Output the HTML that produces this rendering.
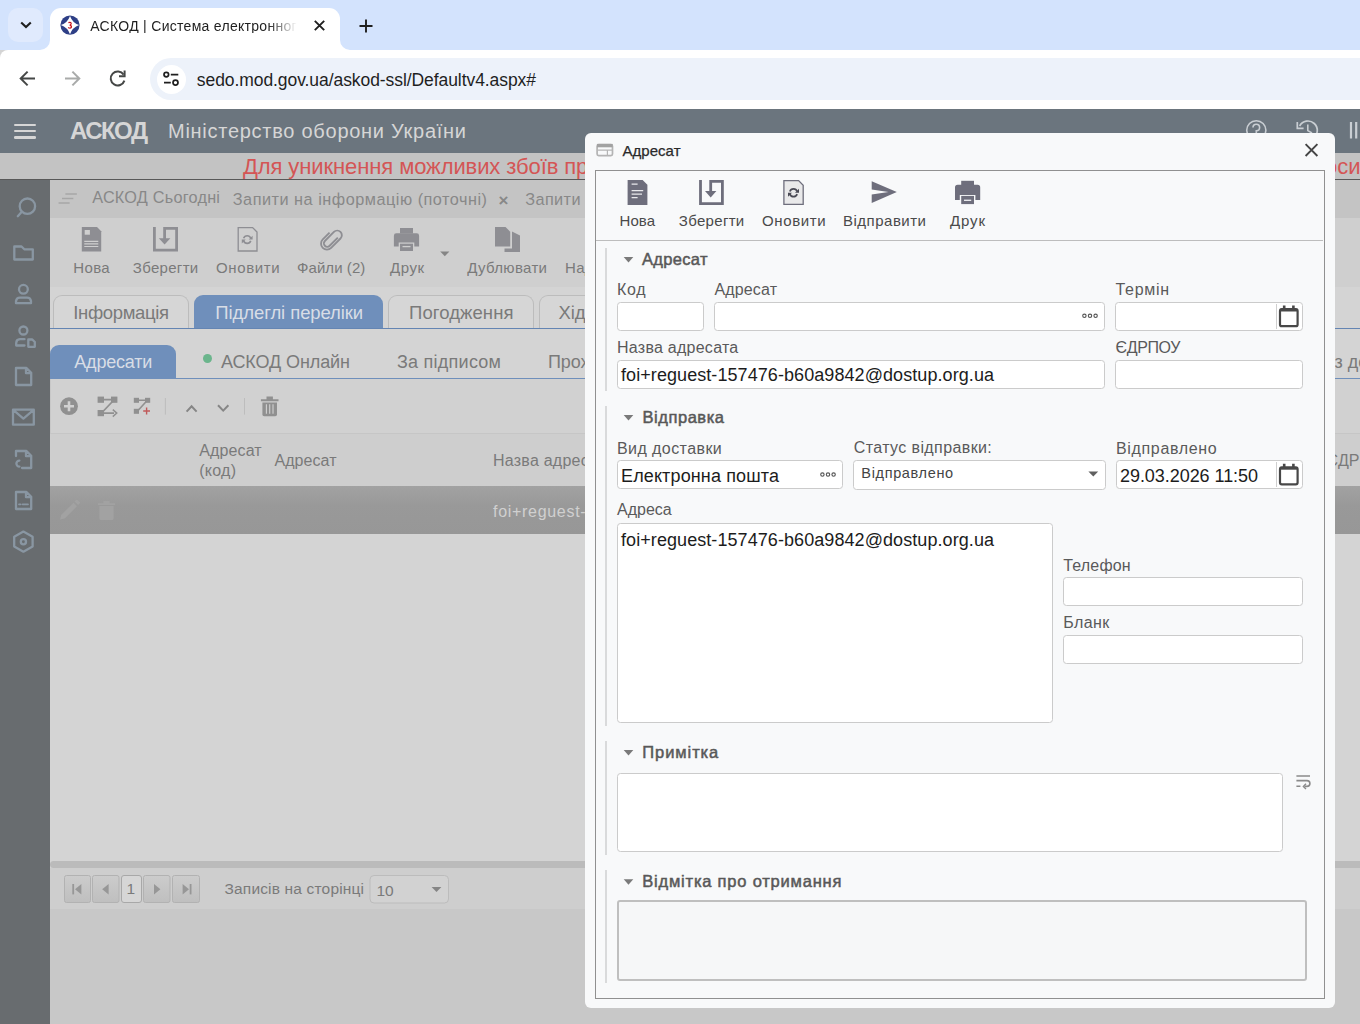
<!DOCTYPE html>
<html lang="uk">
<head>
<meta charset="utf-8">
<title>АСКОД | Система електронного документообігу</title>
<style>
html,body{margin:0;padding:0;}
body{width:1360px;height:1024px;position:relative;overflow:hidden;background:#d4d4d4;font-family:"Liberation Sans",sans-serif;}
.b{position:absolute;box-sizing:border-box;}
.t{position:absolute;white-space:pre;line-height:1;display:block;}
svg{position:absolute;overflow:visible;}
.inp{position:absolute;box-sizing:border-box;background:#fff;border:1px solid #cbcbcb;border-radius:3.5px;}
.vl{position:absolute;width:2px;background:#d9dadb;left:605px;}
</style>
</head>
<body>
<!-- ======= browser chrome ======= -->
<div class="b" id="tabstrip" style="left:0;top:0;width:1360px;height:50px;background:#d3e3fd;"></div>
<div class="b" style="left:8px;top:8px;width:35px;height:34px;border-radius:10px;background:#e0eafd;"></div>
<svg style="left:18px;top:20px" width="16" height="10" viewBox="0 0 16 10"><path d="M3.2 2.4 L8 7 L12.8 2.4" fill="none" stroke="#1f1f1f" stroke-width="2.1"/></svg>
<div class="b" style="left:50px;top:8px;width:290px;height:42px;border-radius:11px 11px 0 0;background:#fff;"></div>
<svg style="left:40px;top:40px" width="10" height="10"><path d="M10 0 V10 H0 A10 10 0 0 0 10 0Z" fill="#fff"/></svg>
<svg style="left:340px;top:40px" width="10" height="10"><path d="M0 0 V10 H10 A10 10 0 0 1 0 0Z" fill="#fff"/></svg>
<svg style="left:59px;top:14px" width="22" height="22" viewBox="59 14 22 22"><circle cx="70" cy="25.1" r="9.6" fill="#2e3f86"/><path d="M70 15.9 Q72.4 22.7 79.2 25.1 Q72.4 27.5 70 34.3 Q67.6 27.5 60.8 25.1 Q67.6 22.7 70 15.9 Z" fill="#fff"/><path d="M68.4 22.7 Q71.4 21.7 71.1 23.9 Q70.7 25.2 69.7 25.2 Q71.9 25.7 71.3 27.4 Q70.4 28.8 68.1 27.5" fill="none" stroke="#c9151c" stroke-width="1.35"/></svg>
<svg style="left:313px;top:19px" width="13" height="13" viewBox="0 0 13 13"><path d="M1.8 1.8 L11.2 11.2 M11.2 1.8 L1.8 11.2" stroke="#1f1f1f" stroke-width="1.9" fill="none"/></svg>
<svg style="left:358px;top:18px" width="16" height="16" viewBox="0 0 16 16"><path d="M8 1.5 V14.5 M1.5 8 H14.5" stroke="#1f1f1f" stroke-width="1.9" fill="none"/></svg>
<div class="b" id="btoolbar" style="left:0;top:50px;width:1360px;height:59px;background:#fff;border-radius:8px 0 0 0;"></div>
<div class="b" style="left:150px;top:58px;width:1260px;height:42px;border-radius:21px;background:#edf2fa;"></div>
<div class="b" style="left:157px;top:65px;width:29px;height:29px;border-radius:15px;background:#fff;"></div>
<svg style="left:0px;top:58px" width="200" height="42" viewBox="0 58 200 42"><path d="M35 78.5 H21.5 M27.6 71.6 L20.7 78.5 L27.6 85.4" fill="none" stroke="#454746" stroke-width="2"/><path d="M65 78.5 H78.5 M72.4 71.6 L79.3 78.5 L72.4 85.4" fill="none" stroke="#a9abaa" stroke-width="2"/><path d="M123.6 74.6 A7 7 0 1 0 124.4 80.6" fill="none" stroke="#454746" stroke-width="2"/><path d="M124.6 70.6 V76.2 H119" fill="none" stroke="#454746" stroke-width="2"/><circle cx="166.3" cy="74.6" r="2.3" fill="none" stroke="#1f1f1f" stroke-width="1.7"/><path d="M170.8 74.6 H178.3 M164 82.6 H170.8" stroke="#1f1f1f" stroke-width="1.9"/><circle cx="175.5" cy="82.6" r="2.5" fill="none" stroke="#1f1f1f" stroke-width="1.7"/></svg>
<!-- ======= app ======= -->
<div class="b" id="apphead" style="left:0;top:109px;width:1360px;height:44px;background:#6b757e;"></div>
<div class="b" style="left:14px;top:123.5px;width:22px;height:2.6px;border-radius:1.3px;background:#d6d6d6;"></div>
<div class="b" style="left:14px;top:129.8px;width:22px;height:2.6px;border-radius:1.3px;background:#d6d6d6;"></div>
<div class="b" style="left:14px;top:136px;width:22px;height:2.6px;border-radius:1.3px;background:#d6d6d6;"></div>
<svg style="left:1240px;top:112px" width="120" height="40" viewBox="1240 112 120 40"><circle cx="1256.3" cy="130.3" r="9.6" fill="none" stroke="#c9ced3" stroke-width="1.6"/><path d="M1253 127.6 A3.3 3.3 0 1 1 1256.3 130.9 V133.2" fill="none" stroke="#c9ced3" stroke-width="1.6"/><circle cx="1256.3" cy="135.8" r="1" fill="#c9ced3"/><path d="M1299.6 126 A9.4 9.4 0 1 1 1299 133.5" fill="none" stroke="#c9ced3" stroke-width="1.7"/><path d="M1297.3 122 V128.3 H1303.6" fill="none" stroke="#c9ced3" stroke-width="1.7"/><path d="M1307.8 124.6 V130.6 L1312 133" fill="none" stroke="#c9ced3" stroke-width="1.6"/><path d="M1351 122 V138.5 M1356.2 122 V138.5" stroke="#c9ced3" stroke-width="2.2"/></svg>
<div class="b" id="banner" style="left:0;top:153px;width:1360px;height:26px;background:#c3c3c3;"></div>
<div class="b" style="left:0;top:179px;width:1360px;height:1px;background:#585858;"></div>
<div class="b" id="sidebar" style="left:0;top:180px;width:50px;height:844px;background:#686c6f;"></div>
<svg style="left:0px;top:190px" width="50" height="380" viewBox="0 190 50 380"><g fill="none" stroke="#8996a2" stroke-width="2.3" stroke-linejoin="round" stroke-linecap="round"><circle cx="27.4" cy="206.2" r="7.7"/><path d="M21.8 211.8 L17.8 216.2"/><path d="M14.3 246.5 H21.5 L24.3 249.3 H32.8 V259.5 H14.3 Z"/><circle cx="23.4" cy="289.3" r="4.4"/><path d="M16 303.2 V301 A4 4 0 0 1 20 297.7 H27 A4 4 0 0 1 31 301 V303.2 Z"/><circle cx="23.4" cy="330.5" r="4"/><path d="M16.2 345.5 V343 A4 4 0 0 1 20 339.2 H24.5 M16.2 345.5 H24.5"/><path d="M28.3 339.5 H32.3 L34.8 342 V346.8 H28.3 Z"/><path d="M16 368 H26.5 L31.2 372.7 V385 H16 Z M26 368.5 V373.2 H31"/><path d="M13 409.7 H33.8 V424.7 H13 Z M13.5 410.2 L23.4 418.6 L33.3 410.2"/><path d="M16 456 V451 H26.5 L31.2 455.7 V468 H22 M26 451.5 V456.2 H31"/><path d="M19.4 460.6 A3 3 0 1 0 19.4 466.6" /><path d="M16 492 H26.5 L31.2 496.7 V509 H16 Z M26 492.5 V497.2 H31"/><path d="M19 504.3 H20.5 M22.5 504.3 H28" stroke-width="1.8"/><path d="M23.4 531.6 L32.6 536.7 V546.6 L23.4 551.7 L14.2 546.6 V536.7 Z"/><circle cx="23.4" cy="541.7" r="2.6"/></g></svg>
<div class="b" id="tabbar" style="left:50px;top:180px;width:1310px;height:38px;background:#c4c4c4;"></div>
<div class="b" id="maintb" style="left:50px;top:218px;width:1310px;height:69px;background:#cfcfcf;"></div>
<svg style="left:55px;top:190px" width="545" height="72" viewBox="55 190 545 72"><path d="M65.4 194 H76.8 M62 198.5 H73.3 M58.6 203 H69.6" stroke="#a6a6a6" stroke-width="1.7"/><path d="M81.8 227 H97 L101.2 231.2 V251.6 H81.8 Z" fill="#8e8e93"/><rect x="84.7" y="230" width="5.2" height="4.7" fill="#cfcfcf"/><path d="M84.3 241.3 H98.3 M84.3 243.9 H98.3 M84.3 246.5 H98.3" stroke="#cfcfcf" stroke-width="1.2"/><path d="M154.4 227 V250.2 H176.6 V228.4 H164.6 V240" fill="none" stroke="#8e8e93" stroke-width="2.8"/><path d="M158.8 238.3 H170.4 L164.6 244.6 Z" fill="#8e8e93"/><path d="M238.2 227.6 H252.6 L257 232 V251 H238.2 Z" fill="none" stroke="#8e8e93" stroke-width="1.3"/><path d="M243.63 238.31 A3.8 3.8 0 0 1 250.77 238.31 M250.77 240.89 A3.8 3.8 0 0 1 243.63 240.89" fill="none" stroke="#8e8e93" stroke-width="1.6"/><path d="M252.6 235.7 V239.6 H248.7 Z M241.8 243.5 V239.6 H245.7 Z" fill="#8e8e93"/><g transform="translate(331.2 239.4) rotate(45) scale(0.8) translate(-331 -239.5)"><path d="M335.2 232 V246.5 A4.2 4.2 0 0 1 326.8 246.5 V230.5 A5.8 5.8 0 0 1 338.4 230.5 V247 A7.4 7.4 0 0 1 323.6 247 V235" fill="none" stroke="#8e8e93" stroke-width="2.3"/></g><path d="M400 228 H413 V233.5 H400 Z" fill="#8e8e93"/><path d="M396.3 233.3 H416.7 A2.4 2.4 0 0 1 419.1 235.7 V246.6 H414.3 V242.6 H398.7 V246.6 H393.9 V235.7 A2.4 2.4 0 0 1 396.3 233.3 Z" fill="#8e8e93"/><path d="M400 243.7 H413 V251 H400 Z" fill="#8e8e93"/><path d="M402.5 246.6 H410.5" stroke="#cfcfcf" stroke-width="1.3"/><path d="M440.2 251.6 H449.4 L444.8 256.2 Z" fill="#858585"/><path d="M495 227 H505.5 L510.2 231.7 V246.6 H495 Z" fill="#8e8e93"/><path d="M512 231.5 L520 235.5 V252 H504.5 V248.4 H512 Z" fill="#8e8e93"/></svg>
<!-- tabs -->
<div class="b" style="left:53px;top:295px;width:136px;height:34px;border:1px solid #bcbcbc;border-bottom:none;border-radius:9px 9px 0 0;background:#d6d6d6;"></div>
<div class="b" style="left:194px;top:295px;width:189px;height:34px;border-radius:9px 9px 0 0;background:#6f8fbb;"></div>
<div class="b" style="left:388px;top:295px;width:146px;height:34px;border:1px solid #bcbcbc;border-bottom:none;border-radius:9px 9px 0 0;background:#d6d6d6;"></div>
<div class="b" style="left:539px;top:295px;width:80px;height:34px;border:1px solid #bcbcbc;border-bottom:none;border-radius:9px 9px 0 0;background:#d6d6d6;"></div>
<div class="b" style="left:50px;top:328px;width:1310px;height:1px;background:#6485b3;"></div>
<!-- subtabs -->
<div class="b" style="left:50px;top:345px;width:126px;height:34px;border-radius:9px 9px 0 0;background:#6f8fbb;"></div>
<div class="b" style="left:50px;top:378px;width:1310px;height:1px;background:#6f8fbb;"></div>
<div class="b" style="left:203px;top:353.5px;width:9px;height:9px;border-radius:5px;background:#6bb58c;"></div>
<!-- grid -->
<div class="b" style="left:50px;top:379px;width:1310px;height:54px;background:#d1d1d1;border-left:1px solid #c8c8c8;"></div>
<div class="b" style="left:50px;top:433px;width:1310px;height:1px;background:#c6c6c6;"></div>
<div class="b" style="left:50px;top:434px;width:1310px;height:52px;background:#cecece;"></div>
<div class="b" style="left:50px;top:486px;width:1310px;height:48px;background:linear-gradient(#a2a2a2 0%,#999999 40%,#979797 100%);"></div>
<svg style="left:55px;top:392px" width="240" height="140" viewBox="55 392 240 140"><circle cx="69" cy="406.2" r="8.9" fill="#909090"/><path d="M69 401.2 V411.2 M64 406.2 H74" stroke="#d1d1d1" stroke-width="2.6"/><rect x="97.6" y="396.6" width="6.4" height="6.2" fill="#909090"/><rect x="111" y="396.6" width="6.4" height="6.2" fill="#909090"/><rect x="97.6" y="410" width="6.4" height="6.2" fill="#909090"/><path d="M103 399.7 H112 M112.5 401.5 L102.5 412 M103 413.1 H114" stroke="#909090" stroke-width="1.8" fill="none"/><path d="M112.8 409.6 L116.8 413.1 L112.8 416.6" stroke="#909090" stroke-width="1.4" fill="none"/><rect x="133.8" y="397.8" width="5.2" height="5" fill="#909090"/><rect x="145" y="397.8" width="5.2" height="5" fill="#909090"/><rect x="133.8" y="408.8" width="5.2" height="5" fill="#909090"/><path d="M138.5 400.3 H146 M146 401.8 L138.5 410" stroke="#909090" stroke-width="1.6" fill="none"/><path d="M146.6 407.6 V414.4 M143.2 411 H150" stroke="#c05a5a" stroke-width="1.4"/><path d="M165.4 398 V414.6" stroke="#bdbdbd" stroke-width="1"/><path d="M186.6 411.6 L191.6 406.2 L196.6 411.6" stroke="#868686" stroke-width="2" fill="none"/><path d="M218 405.2 L223.2 410.6 L228.4 405.2" stroke="#868686" stroke-width="2" fill="none"/><path d="M244.5 398 V414.6" stroke="#bdbdbd" stroke-width="1"/><path d="M260.9 399.2 H278.5 V401.2 H260.9 Z M266.5 396.6 H272.9 V399.4 H266.5 Z" fill="#909090"/><path d="M262.4 402.4 H277 V414.4 A1.8 1.8 0 0 1 275.2 416.2 H264.2 A1.8 1.8 0 0 1 262.4 414.4 Z" fill="#909090"/><path d="M266.4 404.2 V413.8 M269.7 404.2 V413.8 M273 404.2 V413.8" stroke="#d1d1d1" stroke-width="1.1"/><g fill="#a2a2a2"><path d="M60 519.6 L61.2 515 L73.5 502.7 L77 506.2 L64.7 518.5 Z M74.6 501.6 L76.2 500 A1 1 0 0 1 77.6 500 L79.7 502.1 A1 1 0 0 1 79.7 503.5 L78.1 505.1 Z"/><path d="M98 503.2 H115 V505 H98 Z M103.4 501 H109.6 V503.4 H103.4 Z M99.4 506 H113.6 V518.4 A1.6 1.6 0 0 1 112 520 H101 A1.6 1.6 0 0 1 99.4 518.4 Z"/></g></svg>
<div class="b" style="left:50px;top:861px;width:1310px;height:7px;background:#bbbbbb;border-radius:4px 0 0 4px;"></div>
<div class="b" style="left:50px;top:868px;width:1310px;height:41px;background:#cecece;"></div>
<div class="b" style="left:50px;top:909px;width:1310px;height:115px;background:#c8c8c8;"></div>
<svg style="left:60px;top:870px" width="400" height="40" viewBox="60 870 400 40"><defs><linearGradient id="pg" x1="0" y1="0" x2="0" y2="1"><stop offset="0" stop-color="#cccccc"/><stop offset="1" stop-color="#bfbfbf"/></linearGradient></defs><rect x="64.5" y="875.5" width="26" height="27" rx="2" fill="url(#pg)" stroke="#b2b2b2" stroke-width="1"/><rect x="92.5" y="875.5" width="26.5" height="27" rx="2" fill="url(#pg)" stroke="#b2b2b2" stroke-width="1"/><rect x="121.5" y="875.5" width="20" height="27" rx="2.5" fill="#d6d6d6" stroke="#a8a8a8"/><rect x="143.5" y="875.5" width="26.5" height="27" rx="2" fill="url(#pg)" stroke="#b2b2b2" stroke-width="1"/><rect x="172.5" y="875.5" width="27" height="27" rx="2" fill="url(#pg)" stroke="#b2b2b2" stroke-width="1"/><path d="M73.2 884 V894.4" stroke="#979797" stroke-width="1.8"/><path d="M81.4 884 V894.4 L75 889.2 Z" fill="#979797"/><path d="M108.6 884 V894.4 L102.2 889.2 Z" fill="#979797"/><path d="M154 884 V894.4 L160.4 889.2 Z" fill="#979797"/><path d="M182.6 884 V894.4 L189 889.2 Z" fill="#979797"/><path d="M190.6 884 V894.4" stroke="#979797" stroke-width="1.8"/><rect x="370" y="875.5" width="78.5" height="27.5" rx="4" fill="#d2d2d2" stroke="#bcbcbc"/><path d="M431.6 887 H441.4 L436.5 892 Z" fill="#858585"/></svg>
<span class="t" style="left:90.30px;top:19.01px;font-size:14px;color:#1f1f1f;letter-spacing:0.289px;-webkit-mask-image:linear-gradient(90deg,#000 86%,transparent 100%);mask-image:linear-gradient(90deg,#000 86%,transparent 100%);">АСКОД | Система електронног</span>
<span class="t" style="left:196.80px;top:72.00px;font-size:17.5px;color:#1f1f1f;letter-spacing:-0.072px;">sedo.mod.gov.ua/askod-ssl/Defaultv4.aspx#</span>
<span class="t" style="left:70.00px;top:119.01px;font-size:24px;color:#d6d6d6;letter-spacing:-1.543px;font-weight:700;">АСКОД</span>
<span class="t" style="left:168.00px;top:121.01px;font-size:20px;color:#d6d6d6;letter-spacing:0.729px;">Міністерство оборони України</span>
<span class="t" style="left:243.00px;top:156.00px;font-size:22px;color:#d45555;letter-spacing:-0.100px;">Для уникнення можливих збоїв при роботі в системі</span>
<span class="t" style="left:1324.90px;top:156.00px;font-size:22px;color:#d45555;">осил</span>
<span class="t" style="left:92.20px;top:189.01px;font-size:16.25px;color:#888888;letter-spacing:0.226px;">АСКОД Сьогодні</span>
<span class="t" style="left:232.80px;top:191.01px;font-size:16.25px;color:#888888;letter-spacing:0.509px;">Запити на інформацію (поточні)</span>
<span class="t" style="left:498.50px;top:192.00px;font-size:17px;color:#888888;letter-spacing:-0.938px;font-weight:700;">×</span>
<span class="t" style="left:525.30px;top:191.01px;font-size:16.25px;color:#888888;letter-spacing:0.390px;">Запити</span>
<span class="t" style="left:73.30px;top:260.01px;font-size:15px;color:#7a7a7a;letter-spacing:0.357px;">Нова</span>
<span class="t" style="left:132.80px;top:260.01px;font-size:15px;color:#7a7a7a;letter-spacing:0.309px;">Зберегти</span>
<span class="t" style="left:216.00px;top:260.01px;font-size:15px;color:#7a7a7a;letter-spacing:0.618px;">Оновити</span>
<span class="t" style="left:297.00px;top:260.01px;font-size:15px;color:#7a7a7a;letter-spacing:0.067px;">Файли (2)</span>
<span class="t" style="left:390.00px;top:260.01px;font-size:15px;color:#7a7a7a;letter-spacing:0.531px;">Друк</span>
<span class="t" style="left:467.20px;top:260.01px;font-size:15px;color:#7a7a7a;letter-spacing:0.332px;">Дублювати</span>
<span class="t" style="left:565.00px;top:260.01px;font-size:15px;color:#7a7a7a;letter-spacing:0.350px;">Надіслати</span>
<span class="t" style="left:73.30px;top:304.01px;font-size:18.5px;color:#7a7a7a;letter-spacing:-0.355px;">Інформація</span>
<span class="t" style="left:215.30px;top:304.01px;font-size:18.5px;color:#d8dde6;letter-spacing:-0.086px;">Підлеглі переліки</span>
<span class="t" style="left:409.00px;top:304.01px;font-size:18.5px;color:#7a7a7a;letter-spacing:0.085px;">Погодження</span>
<span class="t" style="left:558.40px;top:304.01px;font-size:18.5px;color:#7a7a7a;letter-spacing:-0.100px;">Хід</span>
<span class="t" style="left:74.30px;top:353.01px;font-size:18px;color:#d8dde6;letter-spacing:-0.208px;">Адресати</span>
<span class="t" style="left:220.90px;top:353.01px;font-size:18px;color:#7a7a7a;letter-spacing:-0.095px;">АСКОД Онлайн</span>
<span class="t" style="left:397.00px;top:353.01px;font-size:18px;color:#7a7a7a;letter-spacing:0.247px;">За підписом</span>
<span class="t" style="left:548.00px;top:353.01px;font-size:18px;color:#7a7a7a;letter-spacing:-0.100px;">Проходження</span>
<span class="t" style="left:199.30px;top:443.00px;font-size:16px;color:#7a7a7a;letter-spacing:0.119px;">Адресат</span>
<span class="t" style="left:199.30px;top:463.00px;font-size:16px;color:#7a7a7a;letter-spacing:0.245px;">(код)</span>
<span class="t" style="left:274.40px;top:453.00px;font-size:16px;color:#7a7a7a;letter-spacing:0.069px;">Адресат</span>
<span class="t" style="left:493.00px;top:453.00px;font-size:16px;color:#7a7a7a;letter-spacing:0.238px;">Назва адресата</span>
<span class="t" style="left:1326.50px;top:453.00px;font-size:16px;color:#7a7a7a;">ЄДРПОУ</span>
<span class="t" style="left:1334.60px;top:353.01px;font-size:18px;color:#7a7a7a;">з документами</span>
<span class="t" style="left:493.00px;top:504.00px;font-size:16px;color:#d0d0d0;letter-spacing:0.700px;">foi+reguest-157476-b60a9842@dostup.org.ua</span>
<span class="t" style="left:126.60px;top:881.00px;font-size:15.5px;color:#7a7a7a;">1</span>
<span class="t" style="left:224.50px;top:881.00px;font-size:15.5px;color:#7a7a7a;letter-spacing:0.167px;">Записів на сторінці</span>
<span class="t" style="left:376.60px;top:883.00px;font-size:15.5px;color:#7a7a7a;letter-spacing:-0.300px;">10</span>
<!-- ======= modal ======= -->
<div class="b" id="modal" style="left:585px;top:133px;width:750px;height:874.5px;background:#f8f9fa;border-radius:6px;"></div>
<div class="b" style="left:595px;top:170px;width:730px;height:829px;border:1px solid #909090;"></div>
<div class="b" style="left:596px;top:240px;width:727px;height:1px;background:#bdbdbd;"></div>
<svg style="left:590px;top:140px" width="745" height="70" viewBox="590 140 745 70"><rect x="597.1" y="144.6" width="15.4" height="11" rx="1.6" fill="none" stroke="#b4b4b4" stroke-width="1.7"/><path d="M597 145.6 H612.6" stroke="#a2a2a2" stroke-width="3.4"/><path d="M598 150.2 H612 M607.4 150.2 V155" stroke="#b5b5b5" stroke-width="1.2"/><path d="M1305.6 144.2 L1317.4 156 M1317.4 144.2 L1305.6 156" stroke="#454545" stroke-width="1.9"/><path d="M627.6 180 H642.6 L647.4 184.8 V205 H627.6 Z" fill="#6e6e7c"/><path d="M631.6 184.2 H637.6 M631.6 190.6 H643.2 M631.6 194.2 H642 M631.6 197.6 H637.6" stroke="#e9e9ec" stroke-width="1.3"/><path d="M700.5 180 V203.6 H722.4 V181.4 H710.7 V192.6" fill="none" stroke="#6e6e7c" stroke-width="2.8"/><path d="M705 191 H716.4 L710.7 197.4 Z" fill="#6e6e7c"/><path d="M783.9 180.6 H798.6 L803.2 185.2 V204.4 H783.9 Z" fill="#e9e9ea" stroke="#6e6e7c" stroke-width="1.3"/><path d="M789.84 191.47 A3.9 3.9 0 0 1 797.16 191.47 M797.16 194.13 A3.9 3.9 0 0 1 789.84 194.13" fill="none" stroke="#4a4a55" stroke-width="1.7"/><path d="M799 188.8 V192.8 H795 Z M788 196.8 V192.8 H792 Z" fill="#4a4a55"/><path d="M871.7 181.2 L896.8 192 L871.7 202.9 V194.6 L888.5 192 L871.7 189.4 Z" fill="#6e6e7c"/><path d="M961.2 180.8 H974 V186 H961.2 Z" fill="#6e6e7c"/><path d="M957.6 184.7 H977.6 A2.6 2.6 0 0 1 980.2 187.3 V199.9 H975.4 V194.9 H959.8 V199.9 H955 V187.3 A2.6 2.6 0 0 1 957.6 184.7 Z" fill="#6e6e7c"/><path d="M961.2 195.9 H974 V204.1 H961.2 Z" fill="#6e6e7c"/><path d="M964 200.3 H971.2" stroke="#e9e9ec" stroke-width="1.4"/></svg>
<div class="vl" style="top:248px;height:143px;"></div>
<div class="vl" style="top:406px;height:320px;"></div>
<div class="vl" style="top:741px;height:114px;"></div>
<div class="vl" style="top:870px;height:113px;"></div>
<!-- inputs -->
<div class="inp" style="left:617px;top:302px;width:87px;height:29px;"></div>
<div class="inp" style="left:714px;top:302px;width:391px;height:29px;"></div>
<div class="inp" style="left:1115px;top:302px;width:188px;height:29px;"></div>
<div class="inp" style="left:617px;top:359.5px;width:488px;height:29px;"></div>
<div class="inp" style="left:1115px;top:359.5px;width:188px;height:29px;"></div>
<div class="inp" style="left:617px;top:460px;width:226px;height:29px;"></div>
<div class="inp" style="left:853px;top:460px;width:253px;height:30px;"></div>
<div class="inp" style="left:1116px;top:460px;width:187px;height:29px;"></div>
<div class="inp" style="left:617px;top:523px;width:436px;height:200px;"></div>
<div class="inp" style="left:1063px;top:577px;width:240px;height:29px;"></div>
<div class="inp" style="left:1063px;top:635px;width:240px;height:29px;"></div>
<div class="inp" style="left:617px;top:773px;width:666px;height:79px;"></div>
<div class="inp" style="left:617px;top:900px;width:690px;height:81px;background:#f6f7f8;border:2px solid #bfbfbf;border-radius:3px;"></div>
<svg style="left:600px;top:250px" width="730" height="700" viewBox="600 250 730 700"><path d="M623.7 257 H633.3 L628.5 262.4 Z" fill="#7a7a7a"/><path d="M623.7 415 H633.3 L628.5 420.4 Z" fill="#7a7a7a"/><path d="M623.7 750 H633.3 L628.5 755.4 Z" fill="#7a7a7a"/><path d="M623.7 879.3 H633.3 L628.5 884.7 Z" fill="#7a7a7a"/><circle cx="1084.4" cy="315.8" r="1.7" fill="none" stroke="#555" stroke-width="1.1"/><circle cx="1090" cy="315.8" r="1.7" fill="none" stroke="#555" stroke-width="1.1"/><circle cx="1095.6" cy="315.8" r="1.7" fill="none" stroke="#555" stroke-width="1.1"/><circle cx="822.4" cy="474.6" r="1.7" fill="none" stroke="#555" stroke-width="1.1"/><circle cx="828" cy="474.6" r="1.7" fill="none" stroke="#555" stroke-width="1.1"/><circle cx="833.6" cy="474.6" r="1.7" fill="none" stroke="#555" stroke-width="1.1"/><path d="M1276.5 304 V329 M1276.5 462 V487" stroke="#cfcfcf" stroke-width="1"/><rect x="1280" y="309.2" width="17.6" height="17" rx="1.8" fill="#fff" stroke="#484848" stroke-width="2.2"/><path d="M1284.2 305.6 V310.1 M1293.4 305.6 V310.1" stroke="#484848" stroke-width="2.6"/><path d="M1280 310.2 H1297.6" stroke="#484848" stroke-width="2.6"/><rect x="1280" y="467.4" width="17.6" height="17" rx="1.8" fill="#fff" stroke="#484848" stroke-width="2.2"/><path d="M1284.2 463.8 V468.3 M1293.4 463.8 V468.3" stroke="#484848" stroke-width="2.6"/><path d="M1280 468.4 H1297.6" stroke="#484848" stroke-width="2.6"/><path d="M1088.4 471.4 H1098.2 L1093.3 476.4 Z" fill="#606060"/><path d="M1296.4 776 H1310 M1296.4 780.6 H1307 A2.9 2.9 0 0 1 1307 786.4 H1304.6 M1296.4 786.2 H1300.4" stroke="#8a8a8a" stroke-width="1.6" fill="none"/><path d="M1306 783.8 L1303.4 786.4 L1306 789" stroke="#8a8a8a" stroke-width="1.4" fill="none"/></svg>
<!-- ======= texts ======= -->
<span class="t" style="left:622.50px;top:143.01px;font-size:15px;color:#2a2a2a;letter-spacing:0.029px;-webkit-text-stroke:0.25px #2a2a2a;">Адресат</span>
<span class="t" style="left:619.50px;top:213.01px;font-size:15px;color:#4a4a4a;letter-spacing:0.057px;">Нова</span>
<span class="t" style="left:678.75px;top:213.01px;font-size:15px;color:#4a4a4a;letter-spacing:0.324px;">Зберегти</span>
<span class="t" style="left:762.00px;top:213.01px;font-size:15px;color:#4a4a4a;letter-spacing:0.643px;">Оновити</span>
<span class="t" style="left:843.00px;top:213.01px;font-size:15px;color:#4a4a4a;letter-spacing:0.500px;">Відправити</span>
<span class="t" style="left:950.00px;top:213.01px;font-size:15px;color:#4a4a4a;letter-spacing:0.865px;">Друк</span>
<span class="t" style="left:642.00px;top:251.02px;font-size:16.5px;color:#585858;letter-spacing:0.315px;-webkit-text-stroke:0.5px #585858;">Адресат</span>
<span class="t" style="left:642.50px;top:409.02px;font-size:16.5px;color:#585858;letter-spacing:0.547px;-webkit-text-stroke:0.5px #585858;">Відправка</span>
<span class="t" style="left:642.30px;top:744.02px;font-size:16.5px;color:#585858;letter-spacing:0.917px;-webkit-text-stroke:0.5px #585858;">Примітка</span>
<span class="t" style="left:642.30px;top:873.02px;font-size:16.5px;color:#585858;letter-spacing:0.789px;-webkit-text-stroke:0.5px #585858;">Відмітка про отримання</span>
<span class="t" style="left:617.00px;top:282.00px;font-size:16px;color:#5a5a5a;letter-spacing:0.648px;">Код</span>
<span class="t" style="left:714.50px;top:282.00px;font-size:16px;color:#5a5a5a;letter-spacing:0.135px;">Адресат</span>
<span class="t" style="left:1115.50px;top:282.00px;font-size:16px;color:#5a5a5a;letter-spacing:0.688px;">Термін</span>
<span class="t" style="left:617.00px;top:340.00px;font-size:16px;color:#5a5a5a;letter-spacing:0.257px;">Назва адресата</span>
<span class="t" style="left:1115.50px;top:340.00px;font-size:16px;color:#5a5a5a;letter-spacing:-0.353px;">ЄДРПОУ</span>
<span class="t" style="left:617.00px;top:441.00px;font-size:16px;color:#5a5a5a;letter-spacing:0.422px;">Вид доставки</span>
<span class="t" style="left:853.75px;top:440.00px;font-size:16px;color:#5a5a5a;letter-spacing:0.393px;">Статус відправки:</span>
<span class="t" style="left:1116.00px;top:441.00px;font-size:16px;color:#5a5a5a;letter-spacing:0.658px;">Відправлено</span>
<span class="t" style="left:617.00px;top:502.00px;font-size:16px;color:#5a5a5a;letter-spacing:0.009px;">Адреса</span>
<span class="t" style="left:1063.30px;top:558.00px;font-size:16px;color:#5a5a5a;letter-spacing:0.154px;">Телефон</span>
<span class="t" style="left:1063.30px;top:615.00px;font-size:16px;color:#5a5a5a;letter-spacing:0.377px;">Бланк</span>
<span class="t" style="left:621.00px;top:366.01px;font-size:18px;color:#1c1c1c;letter-spacing:0.073px;">foi+reguest-157476-b60a9842@dostup.org.ua</span>
<span class="t" style="left:621.00px;top:467.01px;font-size:18px;color:#1c1c1c;letter-spacing:0.132px;">Електронна пошта</span>
<span class="t" style="left:1120.00px;top:467.01px;font-size:18px;color:#1c1c1c;letter-spacing:-0.053px;">29.03.2026 11:50</span>
<span class="t" style="left:621.00px;top:531.01px;font-size:18px;color:#1c1c1c;letter-spacing:0.073px;">foi+reguest-157476-b60a9842@dostup.org.ua</span>
<span class="t" style="left:861.30px;top:466.01px;font-size:14.5px;color:#444;letter-spacing:0.659px;">Відправлено</span>
</body>
</html>
